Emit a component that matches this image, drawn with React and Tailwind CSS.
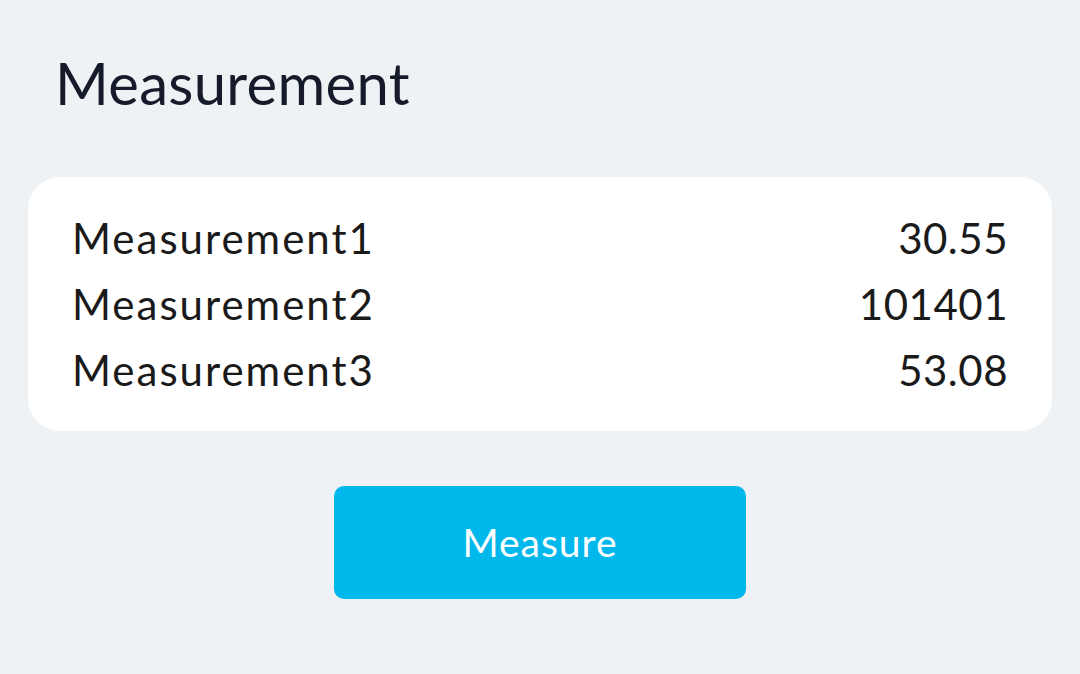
export default function App() {
  const rows = [
    { name: "Measurement1", value: "30.55" },
    { name: "Measurement2", value: "101401" },
    { name: "Measurement3", value: "53.08" },
  ];

  return (
    <div
      className="w-[1080px] h-[674px] bg-[#eef2f5] overflow-hidden"
      style={{ fontFamily: "Lato, 'Noto Sans', sans-serif" }}
    >
      {/* Header */}
      <h1 className="pl-[55px] pt-[50px] text-[58px] leading-[66px] text-[#161b2c] font-normal tracking-[0.3px]">
        Measurement
      </h1>

      {/* Result card */}
      <div className="mx-[28px] mt-[61px] bg-white rounded-[32px] pl-[44px] pr-[44px] pt-[28px] pb-[28px]">
        {rows.map((row) => (
          <div
            key={row.name}
            className="flex justify-between items-center h-[66px] text-[42px] text-[#1a1a1a]"
          >
            <span className="tracking-[2px]">{row.name}</span>
            <span className="tracking-[0.5px]">{row.value}</span>
          </div>
        ))}
      </div>

      {/* Action */}
      <div className="flex justify-center mt-[55px]">
        <button className="w-[412px] h-[113px] bg-[#00b8ec] rounded-[10px] text-white text-[39px] tracking-[1px]">
          Measure
        </button>
      </div>
    </div>
  );
}
